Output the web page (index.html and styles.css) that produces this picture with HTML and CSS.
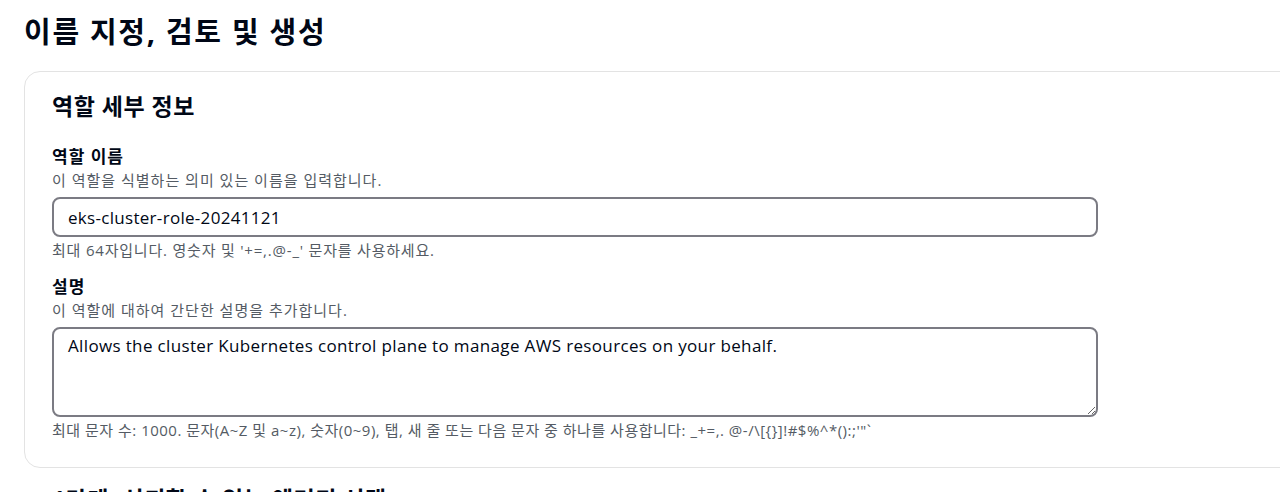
FILE: index.html
```html
<!DOCTYPE html>
<html lang="ko">
<head>
<meta charset="utf-8">
<title>이름 지정, 검토 및 생성</title>
<link rel="stylesheet" href="styles.css">
</head>
<body>
<main class="page">
  <h1 class="page-title">이름 지정, 검토 및 생성</h1>
  <section class="card">
    <h2 class="card-title">역할 세부 정보</h2>
    <div class="field">
      <label class="field-label" for="role-name">역할 이름</label>
      <div class="field-desc">이 역할을 식별하는 의미 있는 이름을 입력합니다.</div>
      <input class="text-input" id="role-name" type="text" value="eks-cluster-role-20241121">
      <div class="field-hint">최대 64자입니다. 영숫자 및 '+=,.@-_' 문자를 사용하세요.</div>
    </div>
    <div class="field field-second">
      <label class="field-label" for="role-desc">설명</label>
      <div class="field-desc">이 역할에 대하여 간단한 설명을 추가합니다.</div>
      <textarea class="text-area" id="role-desc">Allows the cluster Kubernetes control plane to manage AWS resources on your behalf.</textarea>
      <div class="field-hint field-hint-long">최대 문자 수: 1000. 문자(A~Z 및 a~z), 숫자(0~9), 탭, 새 줄 또는 다음 문자 중 하나를 사용합니다: _+=,. @-/\[{}]!#$%^*():;'"`</div>
    </div>
  </section>
  <h2 class="next-title">1단계: 신뢰할 수 있는 엔터티 선택</h2>
</main>
</body>
</html>
```

FILE: styles.css
```css
html, body {
  margin: 0;
  padding: 0;
  overflow: hidden;
  background: #ffffff;
}

body {
  font-family: "Open Sans", "Noto Sans CJK KR", sans-serif;
  color: #000716;
}

.page {
  padding: 0 0 0 24px;
  width: 1320px;
}

.page-title {
  margin: 0;
  padding-top: 14px;
  font-size: 29px;
  line-height: 36px;
  letter-spacing: 1.7px;
  font-weight: 700;
  color: #000716;
}

.card {
  margin-top: 21px;
  border: 1px solid #e3e3e3;
  border-radius: 16px;
  padding: 20px 27px 27px 27px;
}

.card-title {
  margin: 0;
  font-size: 23px;
  line-height: 28px;
  letter-spacing: 0.5px;
  font-weight: 700;
}

.field {
  margin-top: 26px;
  display: flex;
  flex-direction: column;
  width: 1046px;
}

.field-second {
  margin-top: 16px;
}

.field-label {
  font-size: 17px;
  line-height: 22px;
  letter-spacing: 1px;
  font-weight: 700;
  color: #000716;
}

.field-desc {
  margin-top: 2px;
  font-size: 15px;
  line-height: 20px;
  letter-spacing: 1px;
  color: #545b64;
}

.text-input,
.text-area {
  box-sizing: border-box;
  width: 1046px;
  margin-top: 7px;
  border: 2px solid #7b7b83;
  border-radius: 8px;
  font-family: "Open Sans", "Noto Sans CJK KR", sans-serif;
  font-size: 17px;
  color: #000716;
  background: #ffffff;
  padding: 0 14px;
  outline: none;
}

.text-input {
  height: 40px;
  line-height: 20px;
  letter-spacing: 0.3px;
}

.text-area {
  height: 90px;
  line-height: 20px;
  padding-top: 7px;
  letter-spacing: 0.35px;
  resize: vertical;
  display: block;
}

.field-hint {
  margin-top: 3px;
  font-size: 15px;
  line-height: 20px;
  letter-spacing: 0.8px;
  color: #545b64;
  white-space: nowrap;
}

.field-hint-long {
  letter-spacing: 0.5px;
}

.next-title {
  margin: 17px 0 0 28px;
  font-size: 23px;
  line-height: 28px;
  letter-spacing: 0.5px;
  font-weight: 700;
}
```
